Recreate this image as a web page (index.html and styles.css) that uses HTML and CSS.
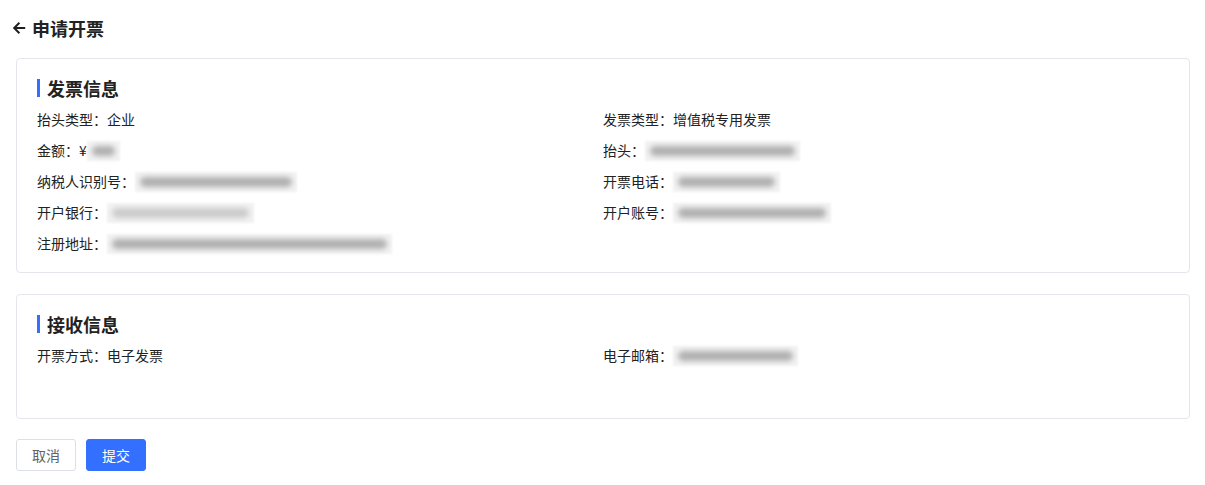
FILE: index.html
```html
<!DOCTYPE html>
<html lang="zh">
<head>
<meta charset="utf-8">
<title>申请开票</title>
<link rel="stylesheet" href="styles.css">
</head>
<body>
<div class="page">
  <div class="header">
    <svg class="back" viewBox="0 0 14 14" width="14" height="14"><path d="M13.2 7H2.2M7.4 1.8L2.2 7L7.4 12.2" fill="none" stroke="#1f1f1f" stroke-width="2"/></svg>
    <span class="header-title">申请开票</span>
  </div>

  <div class="card">
    <div class="section-title">发票信息</div>
    <div class="grid">
      <div class="row">抬头类型：企业</div>
      <div class="row">发票类型：增值税专用发票</div>
      <div class="row">金额：¥<span class="mask w-33"><span class="mask-ink"></span></span></div>
      <div class="row">抬头：<span class="mask w-155"><span class="mask-ink"></span></span></div>
      <div class="row">纳税人识别号：<span class="mask w-162"><span class="mask-ink"></span></span></div>
      <div class="row">开票电话：<span class="mask w-107"><span class="mask-ink"></span></span></div>
      <div class="row">开户银行：<span class="mask w-147"><span class="mask-ink light"></span></span></div>
      <div class="row">开户账号：<span class="mask w-158"><span class="mask-ink"></span></span></div>
      <div class="row">注册地址：<span class="mask w-285"><span class="mask-ink"></span></span></div>
    </div>
  </div>

  <div class="card card-receive">
    <div class="section-title">接收信息</div>
    <div class="grid">
      <div class="row">开票方式：电子发票</div>
      <div class="row">电子邮箱：<span class="mask w-125"><span class="mask-ink"></span></span></div>
    </div>
  </div>

  <div class="actions">
    <button class="btn btn-default">取消</button>
    <button class="btn btn-primary">提交</button>
  </div>
</div>
</body>
</html>
```

FILE: styles.css
```css
* { box-sizing: border-box; }
html, body { margin: 0; padding: 0; background: #fff; }
body {
  font-family: "Noto Sans CJK SC", "Liberation Sans", sans-serif;
  color: #222;
  font-size: 14px;
}
.page { padding: 16px 16px 0 16px; width: 1205px; }
.header {
  display: flex;
  align-items: center;
  height: 24px;
  margin-left: -4px;
  gap: 6px;
}
.back { display: block; flex: none; width: 14px; height: 14px; }
.header-title {
  font-size: 18px;
  font-weight: 700;
  line-height: 24px;
  color: #222;
}
.card {
  margin-top: 18px;
  width: 1174px;
  border: 1px solid #e4e6eb;
  border-radius: 4px;
  padding: 17px 20px 13px 20px;
}
.card-receive { margin-top: 21px; padding-bottom: 47px; }
.section-title {
  font-size: 18px;
  font-weight: 700;
  line-height: 24px;
  color: #222;
  border-left: 3px solid #3370ff;
  padding-left: 7px;
  height: 18px;
  display: flex;
  align-items: center;
  margin: 3px 0 7px 0;
}
.grid {
  display: grid;
  grid-template-columns: 566px 1fr;
}
.row {
  height: 31px;
  line-height: 31px;
  display: flex;
  align-items: center;
  white-space: nowrap;
}
.mask {
  display: inline-flex;
  align-items: center;
  height: 20px;
  background: #f2f2f2;
  padding: 0 5px;
  filter: blur(1px);
}
.mask-ink {
  display: block;
  width: 100%;
  height: 10px;
  border-radius: 5px;
  background: #b0b0b0;
  filter: blur(2.5px);
}
.mask-ink.light { background: #cbcbcb; }
.w-33 { width: 33px; }
.w-107 { width: 107px; }
.w-125 { width: 125px; }
.w-147 { width: 147px; }
.w-155 { width: 155px; }
.w-158 { width: 158px; }
.w-162 { width: 162px; }
.w-285 { width: 285px; }
.actions {
  margin-top: 20px;
  display: flex;
  gap: 10px;
}
.btn {
  width: 60px;
  height: 32px;
  border-radius: 3px;
  font-family: "Noto Sans CJK SC", "Liberation Sans", sans-serif;
  font-size: 14px;
  cursor: pointer;
}
.btn-default {
  background: #fff;
  border: 1px solid #dcdfe6;
  color: #606266;
}
.btn-primary {
  background: #3370ff;
  border: 1px solid #3370ff;
  color: #fff;
}
```
